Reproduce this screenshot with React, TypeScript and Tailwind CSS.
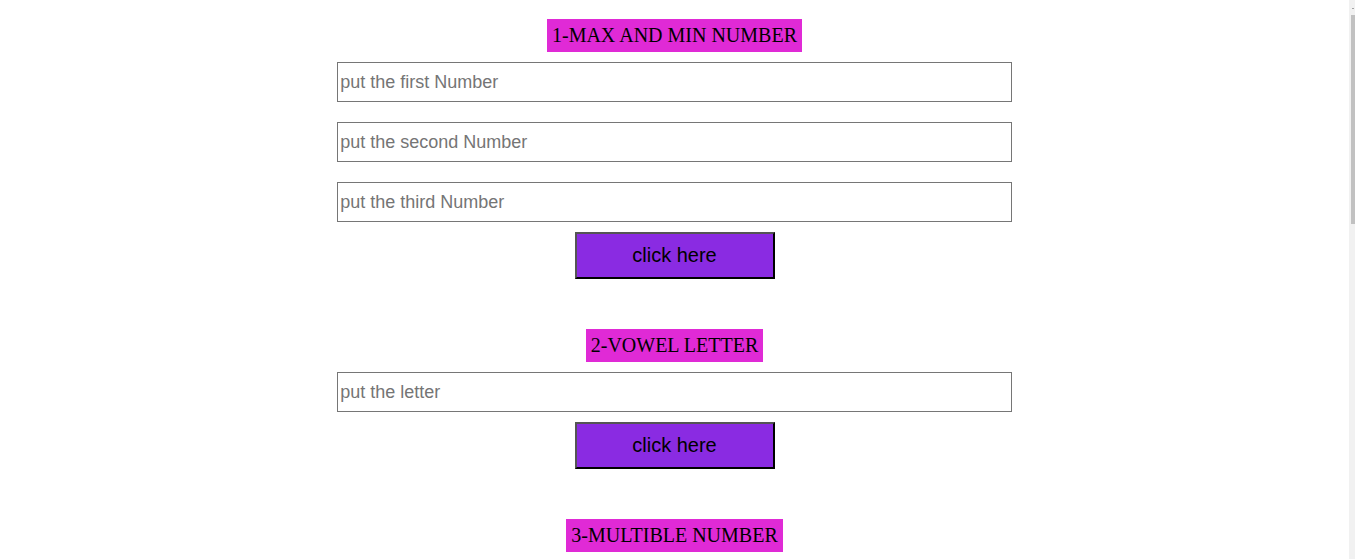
import React from "react";

function Heading({ children }: { children: React.ReactNode }) {
  return (
    <h2 className="bg-[#e02ad6] px-[5px] py-[5px] text-[20px] leading-[23px] text-black font-normal [font-family:'Liberation_Serif','Times_New_Roman',serif]">
      {children}
    </h2>
  );
}

function Field({ placeholder }: { placeholder: string }) {
  return (
    <input
      type="text"
      placeholder={placeholder}
      className="w-1/2 h-[40px] border border-[#767676] px-[2px] text-[18px] text-black placeholder:text-[#757575] [font-family:'Liberation_Sans',Arial,sans-serif] outline-none bg-white"
    />
  );
}

function Btn() {
  return (
    <button className="mt-[10px] w-[200px] h-[47px] bg-[#8a2be2] border-2 border-t-[#555] border-l-[#555] border-r-black border-b-black text-[20px] leading-[23px] text-black [font-family:'Liberation_Sans',Arial,sans-serif]">
      click here
    </button>
  );
}

export default function App() {
  return (
    <div className="relative h-screen overflow-hidden bg-white">
      <div className="w-[1349px] flex flex-col items-center pt-[19px]">
        <Heading>1-MAX AND MIN NUMBER</Heading>
        <div className="mt-[10px] w-full flex flex-col items-center gap-[20px]">
          <Field placeholder="put the first Number" />
          <Field placeholder="put the second Number" />
          <Field placeholder="put the third Number" />
        </div>
        <Btn />

        <div className="mt-[50px]">
          <Heading>2-VOWEL LETTER</Heading>
        </div>
        <div className="mt-[10px] w-full flex flex-col items-center">
          <Field placeholder="put the letter" />
        </div>
        <Btn />

        <div className="mt-[50px]">
          <Heading>3-MULTIBLE NUMBER</Heading>
        </div>
      </div>

      {/* scrollbar */}
      <div className="absolute right-0 top-0 w-[6px] h-full bg-[#f1f1f1]">
        <div className="absolute left-[3px] top-[8px] w-[2px] h-[1px] bg-[#a3a3a3]" />
        <div className="absolute left-[2px] top-[15px] w-[4px] h-[209px] bg-[#c1c1c1]" />
      </div>
    </div>
  );
}
